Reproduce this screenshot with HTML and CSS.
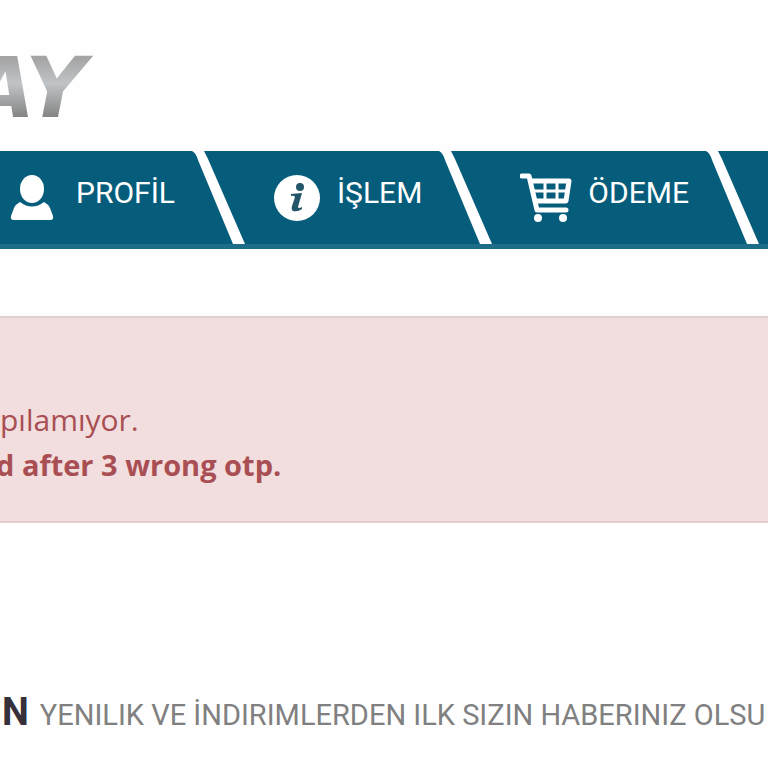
FILE: index.html
```
<!DOCTYPE html>
<html lang="tr">
<head>
  <meta charset="UTF-8">
  <meta name="viewport" content="width=device-width, initial-scale=1">
  <title>Profil</title>
  <link rel="stylesheet" href="styles.css">
</head>
<body>

  <header class="header">
    <a class="logo" href="#">AY</a>
  </header>

  <nav class="menu">
    <a class="menu-item profile" href="#">
      <svg class="icon" width="44" height="48" viewBox="0 0 44 48" fill="#fff">
        <ellipse cx="22" cy="16" rx="12" ry="14"/>
        <path d="M10 29Q22 38 34 29Q38 31 40 35L43 43Q44 47 40 47H4Q0 47 1 43L4 35Q6 31 10 29Z"/>
      </svg>
      <span>PROFİL</span>
    </a>
    <svg class="slash" width="54" height="93" viewBox="0 0 54 93"><path d="M0 0H12L16 8L53 93H41L6 9Q4 2 0 0Z" fill="#fff"/></svg>
    <a class="menu-item" href="#">
      <svg class="icon" width="48" height="48" viewBox="0 0 48 48">
        <circle cx="24" cy="25" r="23" fill="#fff"/>
        <circle cx="27" cy="14" r="4" fill="#24566a"/>
        <path d="M18 21L29 20L25 34Q25 36 29 34V36Q25 39 20 38Q18 37 19 33L22 24Q21 22 18 23Z" fill="#24566a"/>
      </svg>
      <span>İŞLEM</span>
    </a>
    <svg class="slash" width="54" height="93" viewBox="0 0 54 93"><path d="M0 0H12L16 8L53 93H41L6 9Q4 2 0 0Z" fill="#fff"/></svg>
    <a class="menu-item" href="#">
      <svg class="icon" width="52" height="50" viewBox="0 0 52 50" fill="none" stroke="#fff">
        <path d="M2 3H9L17 37H46" stroke-width="5" stroke-linejoin="round" stroke-linecap="round"/>
        <path d="M11 8H49L46 28H16" stroke-width="5" stroke-linejoin="round"/>
        <path d="M13 18H48M25 8V28M37 8V28" stroke-width="3"/>
        <circle cx="18" cy="45" r="4" fill="#fff" stroke="none"/>
        <circle cx="43" cy="45" r="4" fill="#fff" stroke="none"/>
      </svg>
      <span>ÖDEME</span>
    </a>
    <svg class="slash" width="54" height="93" viewBox="0 0 54 93"><path d="M0 0H12L16 8L53 93H41L6 9Q4 2 0 0Z" fill="#fff"/></svg>
  </nav>

  <main>
    <div class="alert" role="alert">
      <p>pılamıyor.</p>
      <p class="strong">d after 3 wrong otp.</p>
    </div>
  </main>

  <footer class="newsletter">
    <b>N</b>
    <span>YENILIK VE İNDIRIMLERDEN ILK SIZIN HABERINIZ OLSU</span>
  </footer>

</body>
</html>
```
FILE: styles.css
```
body {
  margin: 0;
  background: #fefefe;
  font-family: Roboto, sans-serif;
  font-size: 30px;
  overflow-x: hidden;
}

.header {
  padding-top: 42px;
  height: 109px;
  overflow: hidden;
}

.logo {
  display: inline-block;
  margin-left: -30px;
  padding-right: 16px;
  font-family: "DejaVu Sans", sans-serif;
  font-size: 84px;
  font-weight: bold;
  font-style: italic;
  line-height: 92px;
  text-decoration: none;
  color: transparent;
  background: linear-gradient(#a4a4a4 18%, #c0c4c6 45%, #808080 84%);
  -webkit-background-clip: text;
  background-clip: text;
}

.menu {
  display: flex;
  align-items: flex-start;
  height: 93px;
  background: #065d7b;
  border-bottom: 5px solid #1e6d88;
  overflow: hidden;
}

.menu-item {
  display: flex;
  flex: none;
  gap: 16px;
  padding: 22px 17px 0 27px;
  line-height: 40px;
  color: #fff;
  text-decoration: none;
}

.profile {
  gap: 22px;
  padding-left: 10px;
}

.icon,
.slash {
  flex: none;
}

.alert {
  margin-top: 67px;
  padding: 79px 0 34px;
  background: #f2dede;
  border: solid #e2d0d1;
  border-width: 2px 0;
  font-family: "Open Sans", sans-serif;
  line-height: 45px;
  color: #a94f54;
}

.alert p {
  margin: 0;
}

.alert .strong {
  margin-left: -4px;
  font-size: 29px;
  font-weight: bold;
}

.newsletter {
  display: flex;
  align-items: baseline;
  gap: 11px;
  margin-top: 164px;
  padding-left: 2px;
  font-size: 29px;
  line-height: 50px;
  color: #808080;
  white-space: nowrap;
  overflow: hidden;
}

.newsletter b {
  font-size: 38px;
  color: #353039;
}
```
